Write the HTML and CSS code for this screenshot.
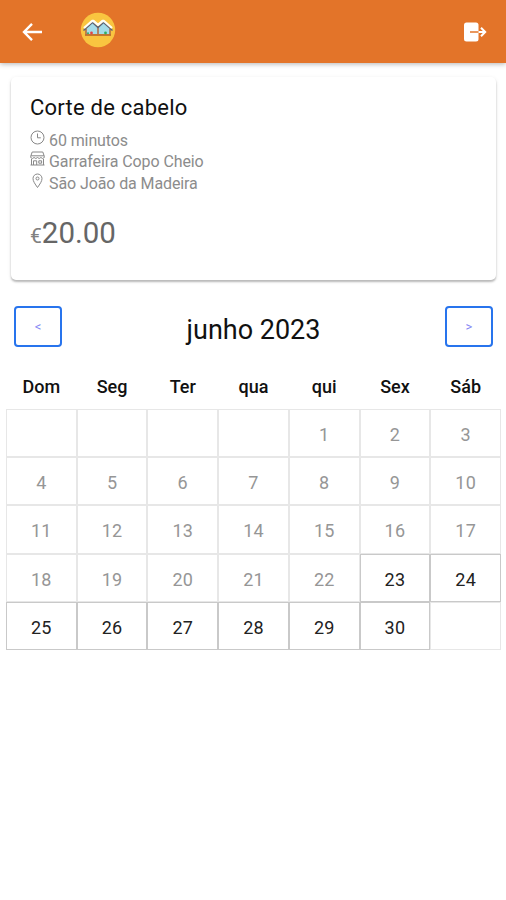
FILE: index.html
```html
<!DOCTYPE html>
<html lang="pt">
<head>
<meta charset="utf-8">
<title>Corte de cabelo</title>
<link rel="stylesheet" href="styles.css">
</head>
<body>
<header class="bar">
  <svg class="back" width="22" height="20" viewBox="0 0 22 20"><path d="M10 1.800 2 10l8 8.200M2.500 10H20"/></svg>
  <svg class="logo" width="36" height="36" viewBox="0 0 36 36">
    <circle cx="18" cy="18" r="17.200" fill="#f9c540"/>
    <path d="M6 17 12.500 10.500 18 16l5.500-5.500L30 17v5H6z" fill="#a5dce8"/>
    <path d="M6 17v5.500M30 17v5.500M18 15v7" fill="none" stroke="#ae6842" stroke-width="1.500"/>
    <path d="M5 23h26" stroke="#b8622c" stroke-width="1.600"/>
    <path d="M3.500 18.500 12.500 10.500l5.500 5 5.500-5 9 8" fill="none" stroke="#596177" stroke-width="1.500"/>
    <path d="M4 16 12 9l1.500 0L18 12.800 22.500 9h1.500l8 7" fill="none" stroke="#fffdf3" stroke-width="2.300" stroke-linejoin="round"/>
    <circle cx="11.500" cy="21" r="1.400" fill="#e44545"/><circle cx="8" cy="21.300" r="1" fill="#35a765"/><circle cx="25.500" cy="21" r="1.400" fill="#30ae61"/>
  </svg>
  <svg class="exit" width="24" height="20" viewBox="0 0 24 20">
    <rect x="1" y=".5" width="14.500" height="19" rx="2.500" fill="#fff"/>
    <path d="M7 10h9" stroke="#e37429" stroke-width="1.500"/>
    <path d="M15.500 10h6.500M18 5.800l4.200 4.200-4.200 4.200" fill="none" stroke="#fff" stroke-width="2"/>
  </svg>
</header>
<main>
  <section class="card">
    <h1>Corte de cabelo</h1>
    <ul class="info">
      <li><svg width="15" height="16" viewBox="0 0 15 16"><circle cx="7.500" cy="7.500" r="6.500"/><path d="M7.500 3.500v4.300h3.300"/></svg><span>60 minutos</span></li>
      <li><svg width="15" height="16" viewBox="0 0 15 16"><path d="M2.200 1h10.600l1.500 4.300v1.200q-1.700 2-3.400 0-1.700 2-3.400 0-1.700 2-3.400 0-1.700 2-3.400 0V5.300zM1.500 8v6M13.500 8v6M.5 14h14M3.500 14V9.800h3.200V14M8.800 9.800h2.800v2.400H8.800zM1 4.800h13"/></svg><span>Garrafeira Copo Cheio</span></li>
      <li><svg width="15" height="16" viewBox="0 0 15 16"><path d="M7.500 14.500C5 11 3 8.200 3 5.500a4.500 4.500 0 0 1 9 0c0 2.700-2 5.500-4.500 9z"/><circle cx="7.500" cy="5.500" r="1.500"/></svg><span>São João da Madeira</span></li>
    </ul>
    <p class="price"><small>€</small>20.00</p>
  </section>
  <div class="month">
    <button>&lt;</button>
    <h2>junho 2023</h2>
    <button>&gt;</button>
  </div>
  <div class="week"><span>Dom</span><span>Seg</span><span>Ter</span><span>qua</span><span>qui</span><span>Sex</span><span>Sáb</span></div>
  <div class="days">
    <span></span><span></span><span></span><span></span><span>1</span><span>2</span><span>3</span>
    <span>4</span><span>5</span><span>6</span><span>7</span><span>8</span><span>9</span><span>10</span>
    <span>11</span><span>12</span><span>13</span><span>14</span><span>15</span><span>16</span><span>17</span>
    <span>18</span><span>19</span><span>20</span><span>21</span><span>22</span><span class="open">23</span><span class="open">24</span>
    <span class="open">25</span><span class="open">26</span><span class="open">27</span><span class="open">28</span><span class="open">29</span><span class="open">30</span><span></span>
  </div>
</main>
</body>
</html>
```
FILE: styles.css
```css
* { box-sizing: border-box; }
body { margin: 0; height: 900px; background: #fff; color: #111; font-family: Roboto, sans-serif; }
h1, h2, p, ul { margin: 0; padding: 0; font-weight: 400; }
svg { display: block; flex: none; }
.bar { display: flex; align-items: center; height: 63px; padding: 0 19px 3px 22px; background: #e37429; box-shadow: 0 1px 5px rgba(0,0,0,.3); }
.back { fill: none; stroke: #fff; stroke-width: 2.4; margin-top: 4px; }
.logo { margin-left: 36px; }
.exit { margin: 3px 0 0 auto; }
.card { height: 203px; margin: 14px 10px 0 11px; padding: 17px 19px 0; border-radius: 5px; box-shadow: 0 2px 2px rgba(0,0,0,.24), 0 1px 4px rgba(0,0,0,.08); }
.card h1 { font-size: 22px; line-height: 28px; letter-spacing: .23px; }
.info { list-style: none; margin-top: 8px; color: #8c8c8c; font-size: 16px; line-height: 21.3px; letter-spacing: -.1px; }
.info li { display: flex; height: 21.3px; }
.info svg { margin: 0 4px 0 0; fill: none; stroke: #888; stroke-width: 1; }
.price { margin-top: 21.500px; color: #666; font-size: 29.5px; line-height: 36px; }
.price small { font-size: 21px; color: #808080; }
.month { display: flex; justify-content: space-between; align-items: center; height: 41px; margin: 26px 13px 0 14px; }
.month button { width: 48px; height: 41px; padding: 0; border: 2px solid #2874ed; border-radius: 4px; background: #fff; color: #8588f5; font: 13px Roboto, sans-serif; }
.month h2 { font-size: 27px; padding-top: 6px; }
.week, .days { display: grid; grid-template-columns: repeat(7, 1fr); margin: 0 5px 0 6px; text-align: center; }
.week { height: 61.5px; padding-top: 28px; font-size: 18px; line-height: 24px; font-weight: 500; color: #111; }
.days { grid-auto-rows: 48.4px; font-size: 18px; line-height: 49px; letter-spacing: .2px; color: #969696; }
.days span { border: 1px solid #e7e7e7; }
.days .open { border-color: #c9c9c9; color: #222; }
```
